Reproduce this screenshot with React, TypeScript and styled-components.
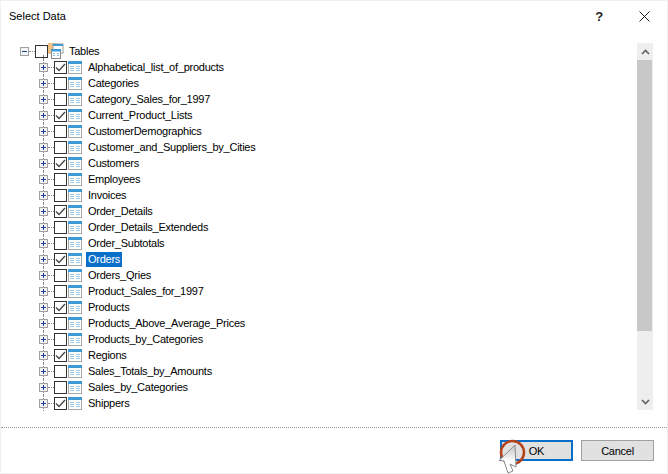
import React from 'react';
import styled, { createGlobalStyle } from 'styled-components';

const GlobalStyle = createGlobalStyle`
  html, body {
    margin: 0;
    padding: 0;
    background: #fff;
    overflow: hidden;
  }
`;

const Dialog = styled.div`
  position: relative;
  box-sizing: border-box;
  width: 668px;
  height: 474px;
  background: #fff;
  border: 1px solid #f0f0f0;
  display: flex;
  flex-direction: column;
  font-family: 'Liberation Sans', Arial, sans-serif;
  font-size: 11px;
  letter-spacing: -0.25px;
  color: #000;
`;

const TitleBar = styled.div`
  height: 30px;
  flex: none;
  display: flex;
  align-items: center;
  padding: 0 17px 0 8px;
`;

const Title = styled.div`
  flex: 1;
  letter-spacing: 0;
`;

const HelpMark = styled.div`
  width: 12px;
  margin-right: 34px;
  text-align: center;
  font-size: 13px;
  font-weight: bold;
  color: #222;
`;

const Body = styled.div`
  flex: none;
  height: 367px;
  margin-top: 12px;
  padding: 0 14px 0 18px;
  display: flex;
`;

const Tree = styled.div`
  flex: 1;
  display: flex;
  flex-direction: column;
`;

const Row = styled.div<{ $root?: boolean }>`
  position: relative;
  height: 16px;
  flex: none;
  display: flex;
  align-items: center;
  padding-left: ${p => (p.$root ? 1 : 20)}px;

  &::before {
    content: '';
    position: absolute;
    left: 24px;
    top: ${p => (p.$root ? 12 : 0)}px;
    bottom: 0;
    border-left: 1px dotted #888;
  }
`;

const Expander = styled.div`
  position: relative;
  z-index: 1;
  box-sizing: border-box;
  width: 9px;
  height: 9px;
  flex: none;
  background: #f4f4f4;
  border: 1px solid #a0a0a0;
  display: flex;
  align-items: center;
  justify-content: center;
`;

const Connector = styled.div`
  width: 6px;
  flex: none;
  border-top: 1px dotted #888;
`;

const CheckBox = styled.div`
  box-sizing: border-box;
  width: 13px;
  height: 13px;
  flex: none;
  border: 1px solid #333;
  background: #fff;
  display: flex;
  align-items: center;
  justify-content: center;
`;

const IconSlot = styled.div`
  flex: none;
  margin-left: 1px;
  display: flex;
`;

const Label = styled.span<{ $selected?: boolean; $root?: boolean }>`
  margin-left: ${p => (p.$root ? 3 : 4)}px;
  padding: 1px 2px;
  line-height: 13px;
  background: ${p => (p.$selected ? '#0a6fc8' : 'transparent')};
  color: ${p => (p.$selected ? '#fff' : '#000')};
  white-space: nowrap;
`;

const ScrollBar = styled.div`
  width: 16px;
  flex: none;
  background: #eeeeee;
  display: flex;
  flex-direction: column;
`;

const ScrollButton = styled.div`
  height: 17px;
  flex: none;
  display: flex;
  align-items: center;
  justify-content: center;
`;

const Thumb = styled.div`
  height: 271px;
  flex: none;
  margin-right: 1px;
  background: #c8c8c8;
`;

const ScrollSpacer = styled.div`
  flex: 1;
`;

const Separator = styled.div`
  flex: none;
  margin-top: 17px;
  border-top: 1px dotted #999;
`;

const Footer = styled.div`
  flex: 1;
  display: flex;
  justify-content: flex-end;
  gap: 8px;
  padding: 12px 13px 0 0;
`;

const Button = styled.div<{ $primary?: boolean }>`
  box-sizing: border-box;
  width: 73px;
  height: 21px;
  background: #e1e1e1;
  border: ${p => (p.$primary ? '2px solid #0a6fc8' : '1px solid #a0a0a0')};
  display: flex;
  align-items: center;
  justify-content: center;
`;

const CursorOverlay = styled.svg`
  position: absolute;
  left: 497px;
  top: 437px;
`;

const TABLES: [string, boolean][] = [
  ['Alphabetical_list_of_products', true],
  ['Categories', false],
  ['Category_Sales_for_1997', false],
  ['Current_Product_Lists', true],
  ['CustomerDemographics', false],
  ['Customer_and_Suppliers_by_Cities', false],
  ['Customers', true],
  ['Employees', false],
  ['Invoices', false],
  ['Order_Details', true],
  ['Order_Details_Extendeds', false],
  ['Order_Subtotals', false],
  ['Orders', true],
  ['Orders_Qries', false],
  ['Product_Sales_for_1997', false],
  ['Products', true],
  ['Products_Above_Average_Prices', false],
  ['Products_by_Categories', false],
  ['Regions', true],
  ['Sales_Totals_by_Amounts', false],
  ['Sales_by_Categories', false],
  ['Shippers', true],
];

const CheckMark = () => (
  <svg width="11" height="11" viewBox="0 0 11 11">
    <path d="M1 5.5 L4 8.5 L10 2" fill="none" stroke="#444" strokeWidth="1.3" />
  </svg>
);

const PlusMinus = ({ plus }: { plus: boolean }) => (
  <svg width="7" height="7" viewBox="0 0 7 7">
    <path d="M1 3.5 H6" stroke="#1c3f94" strokeWidth="1" />
    {plus && <path d="M3.5 1 V6" stroke="#1c3f94" strokeWidth="1" />}
  </svg>
);

const TableIcon = () => (
  <svg width="14" height="13" viewBox="0 0 14 13">
    <rect x="0.5" y="0.5" width="13" height="12" fill="#fff" stroke="#a8a8a8" />
    <rect x="0" y="0" width="14" height="3" fill="#3f9bd5" />
    <path d="M2 5.5 H6 M8 5.5 H12 M2 7.5 H6 M8 7.5 H12 M2 9.5 H6 M8 9.5 H12" stroke="#9cc8e6" strokeWidth="1" />
  </svg>
);

const TablesIcon = () => (
  <svg width="16" height="16" viewBox="0 0 16 16">
    <rect x="0.5" y="0.5" width="8" height="10" fill="#f3c27f" stroke="#e0a050" strokeDasharray="1 1" />
    <rect x="5" y="1" width="10" height="9" fill="#fff" stroke="#9a9a9a" />
    <rect x="5" y="1" width="10" height="2" fill="#3f9bd5" />
    <rect x="3.5" y="6.5" width="9" height="9" fill="#fff" stroke="#8a8a8a" />
    <rect x="3" y="6" width="10" height="2.5" fill="#3f9bd5" />
    <path d="M5 10.5 H7 M9 10.5 H11 M5 12.5 H7 M9 12.5 H11" stroke="#7fb6dc" strokeWidth="1" />
  </svg>
);

const Chevron = ({ up }: { up?: boolean }) => (
  <svg width="9" height="6" viewBox="0 0 9 6">
    <path d={up ? 'M1 5 L4.5 1.5 L8 5' : 'M1 1 L4.5 4.5 L8 1'} fill="none" stroke="#606060" strokeWidth="1.6" />
  </svg>
);

const CloseIcon = () => (
  <svg width="11" height="11" viewBox="0 0 11 11">
    <path d="M0.5 0.5 L10.5 10.5 M10.5 0.5 L0.5 10.5" stroke="#222" strokeWidth="1" />
  </svg>
);

const App = () => {
  return (
    <Dialog>
      <GlobalStyle />
      <TitleBar>
        <Title>Select Data</Title>
        <HelpMark>?</HelpMark>
        <CloseIcon />
      </TitleBar>
      <Body>
        <Tree>
          <Row $root>
            <Expander><PlusMinus plus={false} /></Expander>
            <Connector />
            <CheckBox />
            <TablesIcon />
            <Label $root>Tables</Label>
          </Row>
          {TABLES.map(([name, checked]) => (
            <Row key={name}>
              <Expander><PlusMinus plus /></Expander>
              <Connector />
              <CheckBox>{checked && <CheckMark />}</CheckBox>
              <IconSlot><TableIcon /></IconSlot>
              <Label $selected={name === 'Orders'}>{name}</Label>
            </Row>
          ))}
        </Tree>
        <ScrollBar>
          <ScrollButton><Chevron up /></ScrollButton>
          <Thumb />
          <ScrollSpacer />
          <ScrollButton><Chevron /></ScrollButton>
        </ScrollBar>
      </Body>
      <Separator />
      <Footer>
        <Button $primary>OK</Button>
        <Button>Cancel</Button>
      </Footer>
      <CursorOverlay width="30" height="37" viewBox="0 0 30 37">
        <defs>
          <linearGradient id="cursorFill" x1="0" y1="0" x2="0" y2="1">
            <stop offset="0" stopColor="#c4c4c4" />
            <stop offset="0.6" stopColor="#ffffff" />
          </linearGradient>
        </defs>
        <circle cx="14.5" cy="14.5" r="11.5" fill="none" stroke="#b5421a" strokeWidth="2.5" />
        <path d="M17 7 L1 22.5 L6 23 L10 35 L15 33 L12 26 L18 29 Z" fill="url(#cursorFill)" stroke="#8a8a8a" strokeWidth="1" />
      </CursorOverlay>
    </Dialog>
  );
};

export default App;
